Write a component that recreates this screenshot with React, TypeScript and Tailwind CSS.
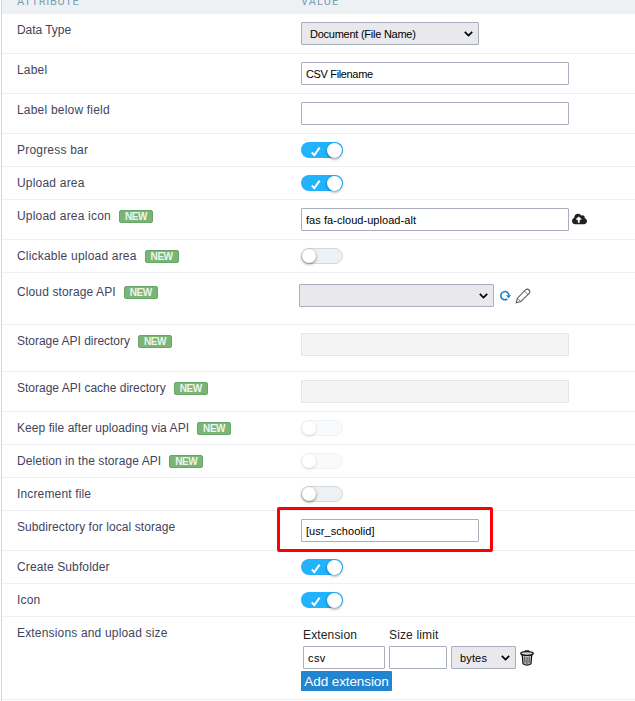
import type { ReactNode } from 'react'
import { FaCloudUploadAlt } from 'react-icons/fa'
import clsx from 'clsx'

function NewBadge() {
  return (
    <span className="mt-0.5 ml-2 flex h-[13px] w-[34px] items-center justify-center rounded-[2px] border border-[#68a568] bg-[#7ab575] text-[10px] leading-none font-bold tracking-[-0.45px] text-[#edf7ec]">
      NEW
    </span>
  )
}

function Toggle({ on, disabled }: { on?: boolean; disabled?: boolean }) {
  return (
    <button
      type="button"
      className={clsx(
        'flex h-4 w-[42px] items-center rounded-full',
        on ? 'justify-end bg-[#21b3fc]' : 'border border-[#d0d9df] bg-[#edf1f4]',
        disabled && 'opacity-30'
      )}
    >
      {on && (
        <svg width="10" height="10" viewBox="0 0 10 10" className="mt-1 mr-1.5" fill="none" stroke="#fff" strokeWidth="2">
          <path d="M.8 5.4 3.3 8.2 8.6.6" />
        </svg>
      )}
      <span
        className={clsx(
          'rounded-full bg-white',
          on ? 'mr-px size-[15px] shadow-[0_1px_3px_rgba(0,40,80,0.55)]' : 'size-3.5 shadow-[0_1px_3px_rgba(0,0,0,0.5)]'
        )}
      />
    </button>
  )
}

type TextBoxProps = { value?: string; className?: string; disabled?: boolean }

function TextBox({ value = '', className = 'w-[268px] tracking-normal', disabled }: TextBoxProps) {
  return (
    <input
      type="text"
      defaultValue={value}
      disabled={disabled}
      className={clsx(
        'h-[23px] rounded-[1px] border pl-1 text-[11px] text-black',
        disabled ? 'border-[#e3e5e8] bg-[#f4f4f4]' : 'border-[#a8aebb] bg-white',
        className
      )}
    />
  )
}

function SelectBox({ value, className }: { value?: string; className: string }) {
  return (
    <div
      className={clsx(
        'flex h-[23px] items-center justify-between rounded-[1px] border border-[#a8aebb] bg-[#e9e9ed] pr-[5px] pl-2 text-[11px] text-black',
        className
      )}
    >
      <span className="pt-0.5">{value}</span>
      <svg width="9" height="6" viewBox="0 0 9 6" fill="none" stroke="#000" strokeWidth="1.7">
        <path d="M.8.8 4.5 4.5 8.2.8" />
      </svg>
    </div>
  )
}

function RefreshIcon() {
  return (
    <svg width="11" height="11" viewBox="0 0 11 11" className="ml-1.5">
      <path d="M7.3 9A4.1 4.1 0 1 1 9 5.6" fill="none" stroke="#1d7fca" strokeWidth="1.6" />
      <path d="M6 5.2H11L8.6 8.2z" fill="#1d7fca" />
    </svg>
  )
}

function PencilIcon() {
  return (
    <svg width="16" height="16" viewBox="0 0 16 16" className="ml-1" fill="none" stroke="#5c5c5c" strokeWidth="1.1">
      <path d="M1.2 14.8 2.4 10.2 10.5 1.9Q12.3.4 14 2 15.6 3.7 14.1 5.5L5.8 13.6z" />
      <path d="M2.4 10.2 5.8 13.6M9.6 3.2 12.8 6.4" strokeWidth=".8" />
    </svg>
  )
}

function TrashIcon() {
  return (
    <svg width="14" height="16" viewBox="0 0 14 16" className="ml-1">
      <path d="M2.2 4.5 3 13.8Q7 16.4 11 13.8L11.8 4.5z" fill="#c9c9c9" stroke="#111" strokeWidth="1.2" />
      <path d="M4.7 6.5 5 13.2M7 7V14M9.3 6.5 9 13.2" stroke="#3a3a3a" strokeWidth="1" />
      <path d="M5 1.8V.8H9V1.8" fill="none" stroke="#111" />
      <path d="M.8 3.4Q1 1.7 7 1.7T13.2 3.4Q13 5.4 7 5.4T.8 3.4z" fill="#d8d8d8" stroke="#111" strokeWidth="1.3" />
    </svg>
  )
}

type RowProps = {
  label: string
  isNew?: boolean
  className?: string
  tracking?: string
  children: ReactNode
}

function Row({ label, isNew, className = 'h-[33px] pt-2', tracking = 'tracking-[0.2px]', children }: RowProps) {
  return (
    <div className={clsx('flex items-start border-b border-[#eeeff3] pl-[15px]', className)}>
      <div className={clsx('flex w-[284px] shrink-0 text-[12px] leading-4 text-[#41455b]', tracking)}>
        {label}
        {isNew && <NewBadge />}
      </div>
      {children}
    </div>
  )
}

export default function App() {
  return (
    <div className="h-[701px] w-[635px] overflow-hidden bg-white pl-px font-['Liberation_Sans',Arial,sans-serif]">
      <div className="h-full border-l border-[#cfd8df]">
        {/* Table header */}
        <div className="flex h-3.5 items-end overflow-hidden bg-[#edf1f4] pb-1.5 pl-[15px] font-[Roboto,sans-serif] text-[11px] leading-3 text-[#759fb3]">
          <span className="w-[284px] tracking-[0.7px]">ATTRIBUTE</span>
          <span className="tracking-[1.1px]">VALUE</span>
        </div>

        <Row label="Data Type" className="h-10 pt-2" tracking="tracking-[-0.05px]">
          <SelectBox value="Document (File Name)" className="w-[178px] tracking-[-0.25px]" />
        </Row>
        <Row label="Label" className="h-10 pt-2">
          <TextBox value="CSV Filename" className="w-[268px] tracking-[-0.35px]" />
        </Row>
        <Row label="Label below field" className="h-10 pt-2">
          <TextBox />
        </Row>
        <Row label="Progress bar">
          <Toggle on />
        </Row>
        <Row label="Upload area">
          <Toggle on />
        </Row>
        <Row label="Upload area icon" isNew className="h-10 pt-2">
          <div className="flex items-center">
            <TextBox value="fas fa-cloud-upload-alt" className="w-[268px] tracking-[0.05px]" />
            <FaCloudUploadAlt className="-mt-px ml-[3px] h-3 w-[15px] text-[#222]" />
          </div>
        </Row>
        <Row label="Clickable upload area" isNew>
          <Toggle />
        </Row>
        <Row label="Cloud storage API" isNew className="h-[52px] pt-[11px]" tracking="tracking-[0.12px]">
          <div className="-ml-0.5 flex items-center">
            <SelectBox className="w-[195px]" />
            <RefreshIcon />
            <PencilIcon />
          </div>
        </Row>
        <Row label="Storage API directory" isNew className="h-[47px] pt-2" tracking="tracking-[-0.02px]">
          <TextBox disabled />
        </Row>
        <Row label="Storage API cache directory" isNew className="h-10 pt-2" tracking="tracking-normal">
          <TextBox disabled />
        </Row>
        <Row label="Keep file after uploading via API" isNew tracking="tracking-[0.06px]">
          <Toggle disabled />
        </Row>
        <Row label="Deletion in the storage API" isNew tracking="tracking-[0.08px]">
          <Toggle disabled />
        </Row>
        <Row label="Increment file" tracking="tracking-[0.15px]">
          <Toggle />
        </Row>
        <Row label="Subdirectory for local storage" className="h-10 pt-2" tracking="tracking-[0.07px]">
          <div className="relative">
            <TextBox value="[usr_schoolid]" className="block w-[178px] tracking-[0.05px]" />
            {/* Highlight over the field */}
            <div className="pointer-events-none absolute -top-3 -left-6 h-[45px] w-[216px] rounded-[2px] border-3 border-[#fb0007]" />
          </div>
        </Row>
        <Row label="Create Subfolder" tracking="tracking-[0.12px]">
          <Toggle on />
        </Row>
        <Row label="Icon">
          <Toggle on />
        </Row>
        <Row label="Extensions and upload size" className="h-[83px] pt-2" tracking="tracking-[0.17px]">
          <div className="pt-0.5">
            <div className="flex pl-0.5 text-[12px] leading-4 tracking-[0.15px] text-[#222]">
              <span className="w-[86px]">Extension</span>
              <span>Size limit</span>
            </div>
            <div className="mt-[3px] flex items-center pl-0.5">
              <TextBox value="csv" className="w-[82px] tracking-[0.4px]" />
              <TextBox className="ml-1 w-[58px]" />
              <SelectBox value="bytes" className="ml-1 w-[65px] tracking-[0.15px]" />
              <TrashIcon />
            </div>
            <button type="button" className="mt-0.5 flex h-5 w-[91px] items-center justify-center rounded-[1px] bg-[#2185d0] pt-0.5 text-[13.5px] tracking-[-0.1px] whitespace-nowrap text-white">
              Add extension
            </button>
          </div>
        </Row>
      </div>
    </div>
  )
}
